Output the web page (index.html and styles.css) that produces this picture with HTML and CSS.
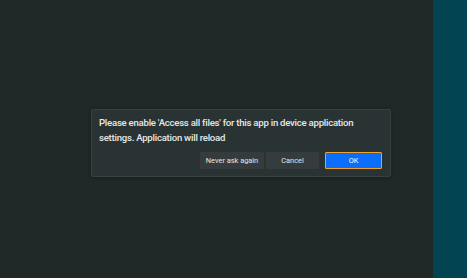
FILE: index.html
```html
<!DOCTYPE html>
<html lang="en">
<head>
  <meta charset="UTF-8" />
  <title>Permission</title>
  <link rel="stylesheet" href="styles.css">
</head>
<body>
  <div class="app">
    <main class="stage">
      <div class="dialog">
        <p class="message">Please enable 'Access all files' for this app in device application settings. Application will reload</p>
        <div class="actions">
          <button class="btn">Never ask again</button>
          <button class="btn">Cancel</button>
          <button class="btn primary">OK</button>
        </div>
      </div>
    </main>
    <aside class="side"></aside>
  </div>
</body>
</html>
```

FILE: styles.css
```css
* { margin: 0; padding: 0; box-sizing: border-box; }
html, body { height: 100%; }
body {
  font-family: Roboto, "Liberation Sans", sans-serif;
  background: #212828;
}

.app {
  display: flex;
  height: 100%;
}

.stage {
  width: 433px;
  padding: 109px 0 0 91px;
}

.side {
  flex: 1;
  background: #034452;
}

/* Dialog */
.dialog {
  width: 300px;
  height: 68px;
  background: #2a3333;
  border: 1px solid #384142;
  border-radius: 2px;
  padding: 5px 8px 0 7px;
  box-shadow: 0 1px 4px rgba(0,0,0,0.3);
}
.message {
  color: #e6e8e8;
  font-size: 9.6px;
  font-weight: 500;
  letter-spacing: -0.25px;
  line-height: 15px;
  width: 280px;
}
.actions {
  display: flex;
  justify-content: flex-end;
  gap: 2px;
  margin-top: 7px;
}
.btn {
  font-family: Roboto, "Liberation Sans", sans-serif;
  font-size: 7.4px;
  color: #e3e5e5;
  background: #363c3d;
  border: none;
  border-radius: 1px;
  height: 17px;
  width: 64px;
}
.btn:nth-child(2) { width: 53px; }
.btn.primary {
  width: 57px;
  margin-left: 4px;
  background: #0a6dfb;
  border: 1px solid #f0a12a;
  color: #fff;
}
```
